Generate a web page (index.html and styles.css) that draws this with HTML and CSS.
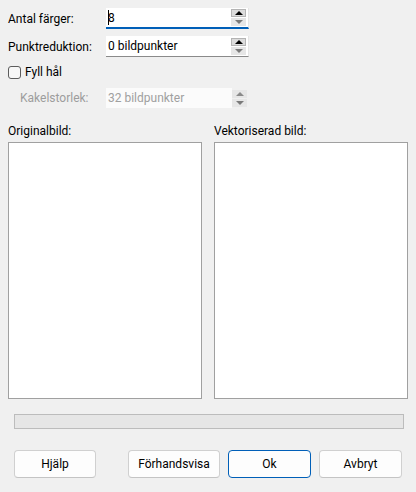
FILE: index.html
```html
<!DOCTYPE html>
<html>
<head>
<meta charset="utf-8">
<link rel="stylesheet" href="styles.css">
</head>
<body>
<div class="dialog">
  <div class="row row-1">
    <span class="label">Antal färger:</span>
    <div class="spin focused">
      <span class="value"><span class="caret"></span>8</span>
      <div class="spin-btns">
        <span class="sb up active"><span class="tri-up"></span></span>
        <span class="sb down"><span class="tri-down"></span></span>
      </div>
    </div>
  </div>
  <div class="row row-2">
    <span class="label">Punktreduktion:</span>
    <div class="spin normal">
      <span class="value">0 bildpunkter</span>
      <div class="spin-btns">
        <span class="sb up active"><span class="tri-up"></span></span>
        <span class="sb down"><span class="tri-down"></span></span>
      </div>
    </div>
  </div>
  <label class="check-row">
    <span class="checkbox"></span>
    <span>Fyll hål</span>
  </label>
  <div class="row row-3 disabled">
    <span class="label indent">Kakelstorlek:</span>
    <div class="spin dis">
      <span class="value">32 bildpunkter</span>
      <div class="spin-btns">
        <span class="sb up"><span class="tri-up"></span></span>
        <span class="sb down"><span class="tri-down"></span></span>
      </div>
    </div>
  </div>
  <div class="previews">
    <div class="preview">
      <span class="plabel">Originalbild:</span>
      <div class="canvas"></div>
    </div>
    <div class="preview">
      <span class="plabel">Vektoriserad bild:</span>
      <div class="canvas"></div>
    </div>
  </div>
  <div class="progress"></div>
  <div class="buttons">
    <button class="btn help">Hjälp</button>
    <div class="right-btns">
      <button class="btn wide">Förhandsvisa</button>
      <button class="btn default">Ok</button>
      <button class="btn">Avbryt</button>
    </div>
  </div>
</div>
</body>
</html>
```
FILE: styles.css
```css
html, body {
  margin: 0;
  padding: 0;
  background: #f0f0f0;
}
body {
  font-family: "Segoe UI", Roboto, "Noto Sans", sans-serif;
  font-size: 12px;
  color: #000;
  width: 416px;
  height: 492px;
  overflow: hidden;
}
.dialog {
  padding: 8px 8px 0 8px;
}
.row {
  display: flex;
  align-items: center;
  height: 21px;
}
.row-2 { margin-top: 7px; }
.row-3 { margin-top: 9px; height: 20px; }
.label {
  width: 98px;
  flex: none;
  line-height: 16px;
}
.label.indent {
  padding-left: 12px;
  width: 86px;
  color: #9d9d9d;
}
.spin {
  width: 143px;
  height: 100%;
  box-sizing: border-box;
  background: #fff;
  display: flex;
  align-items: center;
  position: relative;
}
.spin.focused {
  border-bottom: 2px solid #005fb8;
  border-right: 1px solid #e5e5e5;
}
.spin.normal {
  border-bottom: 1px solid #8a8a8a;
  border-right: 1px solid #e5e5e5;
}
.spin.dis {
  background: transparent;
}
.spin.dis .value {
  background: #fbfbfb;
  color: #a0a0a0;
  align-self: stretch;
  display: flex;
  align-items: center;
}
.value {
  flex: 1;
  padding-left: 2px;
  line-height: 16px;
  display: flex;
  align-items: center;
}
.caret {
  display: inline-block;
  width: 1px;
  height: 15px;
  background: #000;
  margin-right: -1px;
}
.spin-btns {
  width: 15px;
  margin-right: 2px;
  display: flex;
  flex-direction: column;
  gap: 1px;
}
.spin.dis .spin-btns {
  margin-right: 2px;
  align-self: center;
}
.sb {
  height: 8px;
  box-sizing: border-box;
  background: #e6e6e6;
  border: 1px solid #e6e6e6;
  display: flex;
  align-items: center;
  justify-content: center;
}
.sb.up.active {
  background: #dcdcdc;
  border-color: #b4b4b4;
}
.tri-up {
  width: 0;
  height: 0;
  border-left: 4px solid transparent;
  border-right: 4px solid transparent;
  border-bottom: 4px solid #000;
}
.tri-down {
  width: 0;
  height: 0;
  border-left: 4px solid transparent;
  border-right: 4px solid transparent;
  border-top: 4px solid #7a7a7a;
}
.dis .tri-up { border-bottom-color: #8a8a8a; }
.check-row {
  display: flex;
  align-items: center;
  gap: 4px;
  margin-top: 8px;
  height: 14px;
}
.checkbox {
  width: 13px;
  height: 13px;
  box-sizing: border-box;
  border: 1px solid #5c5c5c;
  border-radius: 3px;
  background: #f7f7f7;
}
.previews {
  display: flex;
  gap: 12px;
  margin-top: 15px;
}
.preview {
  display: flex;
  flex-direction: column;
  width: 194px;
}
.plabel {
  line-height: 16px;
  height: 19px;
}
.canvas {
  height: 257px;
  box-sizing: border-box;
  border: 1px solid #a0a0a0;
  background: #fff;
}
.progress {
  margin: 15px 4px 0 6px;
  height: 15px;
  box-sizing: border-box;
  border: 1px solid #bcbcbc;
  background: #e6e6e6;
}
.buttons {
  display: flex;
  justify-content: space-between;
  margin: 21px 6px 0 6px;
}
.right-btns {
  display: flex;
  gap: 8px;
}
.btn {
  font: inherit;
  color: #000;
  width: 83px;
  height: 28px;
  box-sizing: border-box;
  border: 1px solid #d0d0d0;
  border-bottom-color: #c4c4c4;
  border-radius: 4px;
  background: #fdfdfd;
  padding: 0;
}
.btn.help { width: 82px; }
.btn.wide { width: 92px; }
.btn.default {
  border-color: #005fb8;
}
```
